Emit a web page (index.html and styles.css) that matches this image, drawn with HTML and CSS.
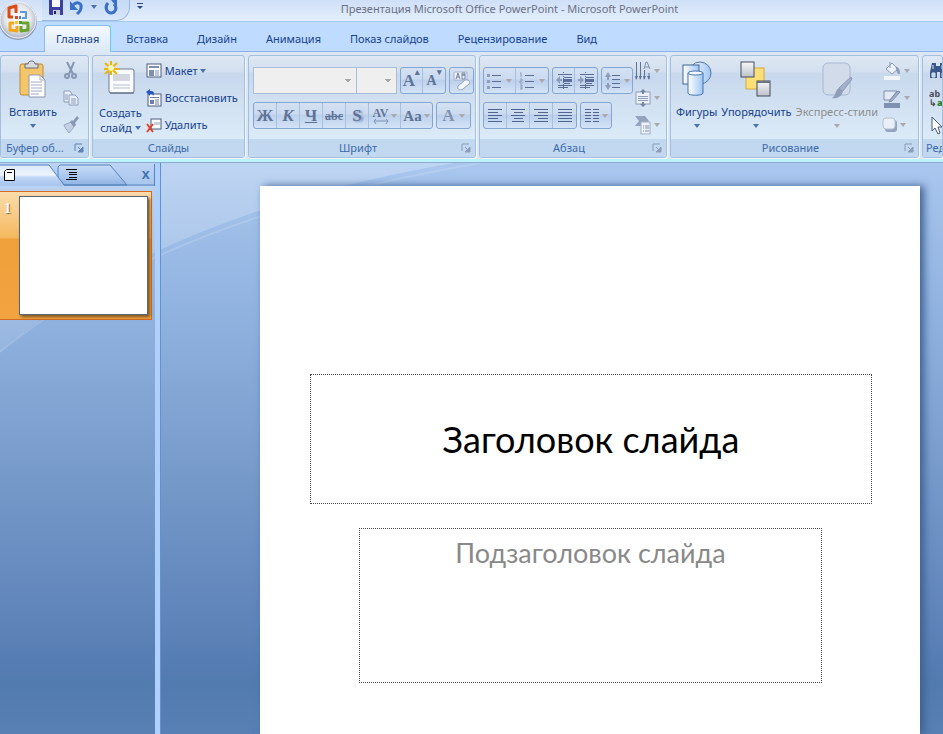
FILE: index.html
```html
<!DOCTYPE html>
<html lang="ru">
  <head>
    <meta charset="UTF-8" />
    <meta name="viewport" content="width=device-width, initial-scale=1.0" />
    <title>Презентация Microsoft Office PowerPoint</title>
    <link rel="stylesheet" href="styles.css">
  </head>
  <body>
    <!-- Title bar -->
    <header class="titlebar">
      <button class="office" aria-label="Office">
        <svg width="40" height="44" viewBox="0 0 40 44">
          <defs>
            <radialGradient id="orb" cx="50%" cy="45%" r="55%">
              <stop offset="0" stop-color="#ffffff" />
              <stop offset="0.65" stop-color="#e6e8ec" />
              <stop offset="1" stop-color="#a9b2c2" />
            </radialGradient>
          </defs>
          <circle cx="18" cy="21" r="19" fill="#8f9db4" />
          <circle cx="18" cy="20" r="18" fill="url(#orb)" stroke="#f4f7fb" />
          <g fill="none" stroke-width="3" stroke-linejoin="round">
            <path d="M13 17H9V8l7-2v7" stroke="#dc4a18" />
            <path d="M20 12h6v6h-4" stroke="#5b9bdc" stroke-width="2" />
            <path d="M14 23h-4v7l7 1v-5" stroke="#f3a51c" />
            <path d="M22 23h6v7l-7 1v-5" stroke="#6aa329" />
          </g>
          <path d="M15 16h3v3h-3z" fill="#dc4a18" />
          <path d="M19 16h2v3h-2z" fill="#3f7fcc" />
          <path d="M15 21h3v3h-3z" fill="#f9c431" />
          <path d="M19 21h3v3h-3z" fill="#4f9b2c" />
        </svg>
      </button>
      <div class="quick">
        <button aria-label="Сохранить">
          <svg width="14" height="18" viewBox="0 0 14 18">
            <path d="M0 0h14v15H1l-1-1z" fill="#3d3fa0" />
            <path d="M3 0h8v7H3z" fill="#f5f8ff" />
            <path d="M4 10h7v5H4z" fill="#c9cede" />
            <path d="M5 11h2v3H5z" fill="#20225c" />
          </svg>
        </button>
        <button aria-label="Отменить">
          <svg width="14" height="18" viewBox="0 0 14 18">
            <path d="M3 5c4-4 9-2 8 3 0 3-2 4-4 6" fill="none" stroke="#3b6fcb" stroke-width="3" />
            <path d="M0 1v9h8z" fill="#3b6fcb" />
          </svg>
        </button>
        <span class="caret"></span>
        <button aria-label="Вернуть">
          <svg width="14" height="18" viewBox="0 0 14 18">
            <path d="M4 3c-4 4-1 10 3 10s7-5 3-9" fill="none" stroke="#3b6fcb" stroke-width="3" />
            <path d="M7 0h6v7z" fill="#3b6fcb" />
          </svg>
        </button>
      </div>
      <button class="customize" aria-label="Настройка панели">
        <svg width="6" height="7" viewBox="0 0 6 7"><path d="M0 0h6v1H0zM0 3h6L3 6z" fill="#2c4d82" /></svg>
      </button>
      <span class="caption">Презентация Microsoft Office PowerPoint - Microsoft PowerPoint</span>
    </header>

    <!-- Ribbon tabs -->
    <nav class="tabs">
      <a href="#" class="active">Главная</a>
      <a href="#">Вставка</a>
      <a href="#">Дизайн</a>
      <a href="#">Анимация</a>
      <a href="#">Показ слайдов</a>
      <a href="#">Рецензирование</a>
      <a href="#">Вид</a>
    </nav>

    <!-- Ribbon -->
    <div class="ribbon">
      <section class="group clipboard">
        <div class="tools">
          <button class="big">
            <svg width="28" height="38" viewBox="0 0 28 38">
              <rect x="1" y="3" width="23" height="31" rx="2" fill="#f3c66b" stroke="#c08a35" />
              <path d="M6 7V3h3c0-4 7-4 7 0h3v4z" fill="#d8dbe0" stroke="#666c78" />
              <path d="M10 14h11l5 5v17H10z" fill="#fff" stroke="#8b98b0" />
              <path d="M21 14v5h5M12 21h11M12 24h11M12 27h11M12 30h11M12 33h8" fill="none" stroke="#a0abc2" />
            </svg>
            <span>Вставить</span>
            <span class="caret"></span>
          </button>
          <div class="stack">
            <button aria-label="Вырезать">
              <svg width="16" height="18" viewBox="0 0 16 18" fill="none" stroke="#8796b4" stroke-width="2">
                <path d="M4 0l6 12M11 0L6 12" />
                <circle cx="4" cy="14" r="2" />
                <circle cx="11" cy="14" r="2" />
              </svg>
            </button>
            <button aria-label="Копировать">
              <svg width="16" height="18" viewBox="0 0 16 18" fill="#e9eef8" stroke="#8c9cba">
                <path d="M1 2h6l2 3v8H1z" />
                <path d="M6 6h6l3 3v7H6z" />
                <path d="M8 10h5M8 12h5M8 14h5M2 6h3M2 8h3M2 10h3" />
              </svg>
            </button>
            <button aria-label="Формат по образцу">
              <svg width="16" height="18" viewBox="0 0 16 18">
                <path d="M1 9l7-3 3 5-5 6c-2-3-4-5-5-8z" fill="#c4d0e4" stroke="#99a9c5" />
                <path d="M7 6l2-2 1 1 4-5 2 2-4 5 1 2-2 2z" fill="#8797b4" />
              </svg>
            </button>
          </div>
        </div>
        <footer>
          <h2>Буфер об...</h2>
          <button class="launch" aria-label="Параметры буфера"><svg width="8" height="8" viewBox="0 0 8 8"><path d="M0 7V0h7" fill="none" stroke="#5f83b5" /><path d="M3 3l4 4M8 3v5H3z" fill="#5f83b5" stroke="#5f83b5" /></svg></button>
        </footer>
      </section>

      <section class="group slides">
        <div class="tools">
          <button class="big">
            <svg width="30" height="38" viewBox="0 0 30 38">
              <rect x="4" y="8" width="25" height="24" rx="2" fill="#fafbfd" stroke="#6f7c93" />
              <path d="M8 13h17v7H8z" fill="#d3d7e0" />
              <path d="M8 24h17M8 27h17" stroke="#b6bdcb" />
              <path d="M5 32h24" stroke="#59667f" />
              <path d="M6 0v14M0 2l12 11M12 2L0 13M-1 8h15" stroke="#f0b400" stroke-width="2" />
              <circle cx="6" cy="7" r="3" fill="#fff9b5" />
            </svg>
            <span>Создать</span>
            <span class="inline">слайд <i class="caret"></i></span>
          </button>
          <div class="stack">
            <button>
              <svg width="16" height="16" viewBox="0 0 16 16">
                <rect x="1" y="1" width="14" height="13" fill="#fff" stroke="#4d5d7c" />
                <path d="M3 3h10v2H3zM3 7h5v6H3z" fill="#7b8eb3" />
                <path d="M9 8h4M9 10h4M9 12h4" stroke="#7b8eb3" />
              </svg>
              Макет <i class="caret"></i>
            </button>
            <button>
              <svg width="16" height="18" viewBox="0 0 16 18">
                <rect x="2" y="5" width="13" height="12" fill="#fff" stroke="#4d5d7c" />
                <path d="M4 8h9v1H4zM4 11h4v4H4z" fill="#6b7fa8" />
                <path d="M9 11h4M9 13h4M9 15h4" stroke="#6b7fa8" />
                <path d="M0 3l4-3v2c4 0 5 2 3 5 0-2-1-2-3-2v2z" fill="#2559c0" />
              </svg>
              Восстановить
            </button>
            <button>
              <svg width="16" height="16" viewBox="0 0 16 16">
                <rect x="5" y="2" width="10" height="10" fill="#fafcff" stroke="#4d5d7c" />
                <path d="M8 5h6v3H8z" fill="#c8d1e2" />
                <path d="M1 7l6 8M7 7l-6 8" stroke="#e0402a" stroke-width="2" />
              </svg>
              Удалить
            </button>
          </div>
        </div>
        <footer><h2>Слайды</h2></footer>
      </section>

      <section class="group font">
        <div class="tools rows">
          <div class="row">
            <div class="combos">
              <select class="face" aria-label="Шрифт" disabled></select>
              <select class="size" aria-label="Размер" disabled></select>
            </div>
            <div class="set">
              <button class="serif grow" aria-label="Увеличить">A<sup>▴</sup></button>
              <button class="serif shrink" aria-label="Уменьшить">A<sup>▾</sup></button>
            </div>
            <div class="set">
              <button aria-label="Очистить формат">
                <svg width="18" height="20" viewBox="0 0 18 20">
                  <path d="M1 1h13v8H1z" fill="#edf1f9" stroke="#a9b6ce" />
                  <path d="M3 8l2-6 2 6M4 6h2M9 2v6M9 2h3v2H9h3v4H9" fill="none" stroke="#7383a3" />
                  <path d="M5 15l7-6c3-1 6 2 4 4l-6 5c-4 2-6 0-5-3z" fill="#f4f6fb" stroke="#8f9fbd" />
                </svg>
              </button>
            </div>
          </div>
          <div class="row">
            <div class="set">
              <button class="serif">Ж</button>
              <button class="serif"><em>К</em></button>
              <button class="serif"><u>Ч</u></button>
              <button class="serif strike"><s>abc</s></button>
              <button class="serif shade">S</button>
              <button class="serif spacing" aria-label="Интервал">
                <span>AV<svg width="16" height="5" viewBox="0 0 16 5"><path d="M1 2h14M3 0L1 2l2 3M13 0l2 2-2 3" fill="none" stroke="#7f92b6" /></svg></span>
                <i class="caret"></i>
              </button>
              <button class="serif case">Aa<i class="caret"></i></button>
            </div>
            <div class="set">
              <button class="serif color">A <i class="caret"></i></button>
            </div>
          </div>
        </div>
        <footer>
          <h2>Шрифт</h2>
          <button class="launch dim" aria-label="Параметры шрифта"><svg width="8" height="8" viewBox="0 0 8 8"><path d="M0 7V0h7" fill="none" stroke="#8d9db8" /><path d="M3 3l4 4M8 3v5H3z" fill="#8d9db8" stroke="#8d9db8" /></svg></button>
        </footer>
      </section>

      <section class="group paragraph">
        <div class="tools">
          <div class="rows">
            <div class="row">
              <div class="set">
                <button aria-label="Маркеры" class="wide">
                  <svg width="14" height="18" viewBox="0 0 14 18"><path d="M5 3.5h9M5 9.5h9M5 15.5h9" stroke="#5b6f95" /><path d="M0 2h3v3H0zM0 8h3v3H0zM0 14h3v3H0z" fill="#8d9dbb" /></svg>
                  <i class="caret"></i>
                </button>
                <button aria-label="Нумерация" class="wide">
                  <svg width="14" height="18" viewBox="0 0 14 18"><path d="M5 3.5h9M5 9.5h9M5 15.5h9" stroke="#5b6f95" /><path d="M0 1h1v4M0 7h2v2H0v2h3M0 13h2v4H0M0 15h2" fill="none" stroke="#8d9dbb" /></svg>
                  <i class="caret"></i>
                </button>
              </div>
              <div class="set">
                <button aria-label="Уменьшить отступ" class="narrow">
                  <svg width="16" height="18" viewBox="0 0 16 18"><path d="M2 2.5h14M8 5.5h8M8 11.5h6M2 13.5h14M2 15.5h10" stroke="#5b6f95" /><path d="M7 7h9v3H7z" fill="#5b6f95" /><path d="M0 8l4-4v3h2v2H4v3z" fill="#8d9dbb" /><path d="M7.500 0v18" stroke="#5b6f95" stroke-dasharray="1 1" /></svg>
                </button>
                <button aria-label="Увеличить отступ" class="narrow">
                  <svg width="16" height="18" viewBox="0 0 16 18"><path d="M2 2.5h14M8 5.5h8M8 11.5h6M2 13.5h14M2 15.5h10" stroke="#5b6f95" /><path d="M7 7h9v3H7z" fill="#5b6f95" /><path d="M6 8L2 4v3H0v2h2v3z" fill="#8d9dbb" /><path d="M7.500 0v18" stroke="#5b6f95" stroke-dasharray="1 1" /></svg>
                </button>
              </div>
              <div class="set">
                <button aria-label="Междустрочный интервал" class="line">
                  <svg width="16" height="18" viewBox="0 0 16 18"><path d="M7 3.5h8M7 7.5h8M7 11.5h8M7 15.5h8" stroke="#5b6f95" /><path d="M3 3v5M3 11v4" stroke="#8d9dbb" stroke-width="2" /><path d="M0 5l3-5 3 5zM0 13l3 5 3-5z" fill="#8d9dbb" /></svg>
                  <i class="caret"></i>
                </button>
              </div>
            </div>
            <div class="row">
              <div class="set">
                <button aria-label="По левому краю"><svg width="14" height="14" viewBox="0 0 14 14"><path d="M0 .5h14M0 3.500h10M0 6.500h14M0 9.500h10M0 12.500h14" stroke="#4f648e" /></svg></button>
                <button aria-label="По центру"><svg width="14" height="14" viewBox="0 0 14 14"><path d="M0 .5h14M3 3.500h9M0 6.500h14M3 9.500h9M1 12.500h12" stroke="#4f648e" /></svg></button>
                <button aria-label="По правому краю"><svg width="14" height="14" viewBox="0 0 14 14"><path d="M0 .5h14M4 3.500h10M0 6.500h14M4 9.500h10M0 12.500h14" stroke="#4f648e" /></svg></button>
                <button aria-label="По ширине"><svg width="14" height="14" viewBox="0 0 14 14"><path d="M0 .5h14M0 3.500h14M0 6.500h14M0 9.500h14M0 12.500h14" stroke="#4f648e" /></svg></button>
              </div>
              <div class="set">
                <button aria-label="Колонки" class="line">
                  <svg width="14" height="14" viewBox="0 0 14 14"><path d="M0 .5h6M8 .5h6M0 3.500h6M8 3.500h6M0 6.500h6M8 6.500h6M0 9.500h6M8 9.500h6M0 12.500h6M8 12.500h6" stroke="#4f648e" /></svg>
                  <i class="caret"></i>
                </button>
              </div>
            </div>
          </div>
          <div class="stack">
            <button aria-label="Направление текста">
              <svg width="16" height="20" viewBox="0 0 16 20"><path d="M1.500 1v17M5.500 1v17M9.500 9v9M14 12v6" stroke="#5f7297" /><path d="M0 15l1 4 2-4M4 15l1 4 2-4M8 15l1 4 2-4M12 15l2 4 1-4" fill="#5f7297" /><path d="M9 8l2-7h1l3 7M10 6h4" fill="none" stroke="#7f8fae" /></svg>
              <i class="caret"></i>
            </button>
            <button aria-label="Выравнивание текста">
              <svg width="16" height="20" viewBox="0 0 16 20"><rect x="1" y="4" width="14" height="12" fill="#edf1f9" stroke="#8d9dbb" /><path d="M3 8.500h10M3 10.500h10M3 12.500h10" stroke="#8d9dbb" /><path d="M5 4l3-3 3 3H9v2H7V4zM5 16l3 3 3-3H9v-2H7v2z" fill="#74849f" /></svg>
              <i class="caret"></i>
            </button>
            <button aria-label="Преобразовать в SmartArt">
              <svg width="16" height="20" viewBox="0 0 16 20"><path d="M0 1h10l4 5-3 5H0l4-5z" fill="#94a3be" /><rect x="6" y="7" width="9" height="12" fill="#edf1f9" stroke="#a3b0c8" /><path d="M8 11h1M8 13h1M8 16h1M10 11h4M10 13h4M10 16h4" stroke="#8191b0" /></svg>
              <i class="caret"></i>
            </button>
          </div>
        </div>
        <footer>
          <h2>Абзац</h2>
          <button class="launch dim" aria-label="Параметры абзаца"><svg width="8" height="8" viewBox="0 0 8 8"><path d="M0 7V0h7" fill="none" stroke="#8d9db8" /><path d="M3 3l4 4M8 3v5H3z" fill="#8d9db8" stroke="#8d9db8" /></svg></button>
        </footer>
      </section>

      <section class="group drawing">
        <div class="tools">
          <button class="big">
            <svg width="32" height="38" viewBox="0 0 32 38">
              <defs>
                <linearGradient id="glass" x1="0" x2="1"><stop offset="0" stop-color="#fff" /><stop offset="1" stop-color="#9fc6f5" /></linearGradient>
              </defs>
              <circle cx="19" cy="12" r="11" fill="url(#glass)" stroke="#57789f" />
              <rect x="2" y="4" width="16" height="19" fill="url(#glass)" stroke="#3f6796" />
              <path d="M7 12v20c0 3 15 3 15 0V12z" fill="url(#glass)" stroke="#4272ad" />
              <ellipse cx="14.500" cy="12" rx="7.500" ry="2" fill="#f3f8ff" stroke="#4272ad" />
            </svg>
            <span>Фигуры</span>
            <span class="caret"></span>
          </button>
          <button class="big">
            <svg width="32" height="38" viewBox="0 0 32 38">
              <defs>
                <linearGradient id="steel" x2="0" y2="1"><stop offset="0" stop-color="#f7f8fa" /><stop offset="1" stop-color="#bcc1cb" /></linearGradient>
              </defs>
              <rect x="6" y="7" width="18" height="21" fill="#fbe07a" stroke="#d9a93a" />
              <rect x="1" y="1" width="13" height="15" fill="url(#steel)" stroke="#454c5b" />
              <rect x="17" y="20" width="13" height="15" fill="url(#steel)" stroke="#454c5b" />
              <path d="M17 21h13" stroke="#6c7482" stroke-width="2" />
            </svg>
            <span>Упорядочить</span>
            <span class="caret"></span>
          </button>
          <button class="big" disabled>
            <svg width="32" height="38" viewBox="0 0 32 38">
              <rect x="2" y="2" width="27" height="32" rx="5" fill="#d2dbea" stroke="#a9b7d0" />
              <path d="M30 16l1 2-9 12-4-3z" fill="#a5b1c8" stroke="#8d9bb8" />
              <path d="M18 27l4 3c-1 5-5 8-11 7 4-2 3-8 7-10z" fill="#8f9dba" />
            </svg>
            <span>Экспресс-стили</span>
            <span class="caret"></span>
          </button>
          <div class="stack">
            <button aria-label="Заливка фигуры">
              <svg width="18" height="20" viewBox="0 0 18 20"><path d="M3 8l6-6 6 6-6 5z" fill="#edf1f8" stroke="#8c9bb8" /><path d="M7 1v6M13 6c3 1 4 4 3 7-2-1-2-4-3-7z" fill="#8c9bb8" stroke="#8c9bb8" /><path d="M1 15h16v4H1z" fill="#f1f4f9" /></svg>
              <i class="caret"></i>
            </button>
            <button aria-label="Контур фигуры">
              <svg width="18" height="20" viewBox="0 0 18 20"><path d="M1 3h13L7 12H1z" fill="#e4eaf5" stroke="#7d8dac" /><path d="M7 12l8-9 2 1-8 9-3 1z" fill="#a5b2ca" stroke="#7d8dac" /><path d="M1 15h16v5H1z" fill="#7f91b2" /></svg>
              <i class="caret"></i>
            </button>
            <button aria-label="Эффекты для фигур">
              <svg width="14" height="20" viewBox="2 0 14 20"><rect x="4" y="5" width="12" height="12" rx="3" fill="#92a2bf" /><rect x="2" y="3" width="12" height="11" rx="3" fill="#e9eef7" stroke="#b4c0d5" /></svg>
              <i class="caret"></i>
            </button>
          </div>
        </div>
        <footer>
          <h2>Рисование</h2>
          <button class="launch dim" aria-label="Параметры рисования"><svg width="8" height="8" viewBox="0 0 8 8"><path d="M0 7V0h7" fill="none" stroke="#8d9db8" /><path d="M3 3l4 4M8 3v5H3z" fill="#8d9db8" stroke="#8d9db8" /></svg></button>
        </footer>
      </section>

      <section class="group editing">
        <div class="tools">
          <div class="stack">
            <button aria-label="Найти">
              <svg width="18" height="18" viewBox="0 0 18 18"><path d="M3 1h4v3h4V1h4l3 9v6h-7v-6H8v6H1v-6z" fill="#3b5688" /><path d="M4 3v4M13 3v4M3 11h3v4H3zM13 11h3v4h-3z" stroke="#dbe7fa" fill="#b8cdf0" /></svg>
            </button>
            <button aria-label="Заменить" class="replace"><span>ab</span><span>↳<b>ac</b></span></button>
            <button aria-label="Выделить">
              <svg width="18" height="20" viewBox="0 0 18 20"><path d="M3 2v14l3-3 3 6 2-1-2-6h4z" fill="#fff" stroke="#4a5a78" /></svg>
            </button>
          </div>
        </div>
        <footer><h2>Ред</h2></footer>
      </section>
    </div>

    <!-- Work area -->
    <main class="work">
      <svg class="swoosh" width="1000" height="573" viewBox="0 0 1000 573" aria-hidden="true">
        <defs>
          <linearGradient id="fade" x2="0" y2="1"><stop offset="0" stop-color="#fff" stop-opacity="0.25" /><stop offset="1" stop-color="#fff" stop-opacity="0.1" /></linearGradient>
        </defs>
        <path d="M0 0H460Q160 50 0 190z" fill="url(#fade)" />
        <path d="M480 1Q165 55 0 190" fill="none" stroke="#fff" stroke-opacity="0.15" stroke-width="2" />
      </svg>
      <aside class="pane">
        <div class="paneTabs">
          <svg class="tabShape" width="154" height="22" viewBox="0 0 154 22" aria-hidden="true">
            <defs>
              <linearGradient id="tabOn" x2="0" y2="1"><stop offset="0" stop-color="#dbe8fb" /><stop offset="0.5" stop-color="#eef4fe" /><stop offset="0.6" stop-color="#c1d7f6" /><stop offset="1" stop-color="#a9c6f0" /></linearGradient>
              <linearGradient id="tabOff" x2="0" y2="1"><stop offset="0" stop-color="#c8dcf6" /><stop offset="0.6" stop-color="#a9c6ee" /><stop offset="1" stop-color="#8fb3e2" /></linearGradient>
            </defs>
            <path d="M58 14V3l2-2h50l17 20H64z" fill="url(#tabOff)" stroke="#5484bf" />
            <path d="M0 1h49l15 20H0z" fill="url(#tabOn)" />
            <path d="M0 1h49l15 20h90" fill="none" stroke="#5484bf" />
          </svg>
          <button aria-label="Слайды"><svg width="12" height="12" viewBox="0 0 12 12"><path d="M2.500 .5h8v11H.5v-9z" fill="#fff" stroke="#000" /><path d="M3 3h5v1H3z" /></svg></button>
          <button aria-label="Структура"><svg width="12" height="12" viewBox="0 0 12 12"><path d="M0 0h11v1H0zM3 3h8v1H3zM3 5h8v1H3zM3 8h8v1H3zM0 10h11v1H0z" /></svg></button>
          <button class="close" aria-label="Закрыть">x</button>
        </div>
        <div class="item">
          <span>1</span>
          <div class="thumb"></div>
        </div>
      </aside>
      <div class="canvas">
        <article class="slide">
          <div class="holder heading">Заголовок слайда</div>
          <div class="holder sub">Подзаголовок слайда</div>
        </article>
      </div>
    </main>
  </body>
</html>
```
FILE: styles.css
```css
* {
  box-sizing: border-box;
}
body {
  margin: 0;
  height: 100vh;
  overflow: hidden;
  display: flex;
  flex-direction: column;
  font-family: "Noto Sans", "Open Sans", sans-serif;
  font-size: 11px;
  line-height: 14px;
  color: #15428b;
  background-color: #bfdbff;
}
button {
  display: flex;
  align-items: center;
  justify-content: center;
  padding: 0;
  border: none;
  background: none;
  font: inherit;
  color: inherit;
  white-space: nowrap;
}
svg {
  display: block;
  flex: none;
  overflow: visible;
}
.caret {
  display: inline-block;
  flex: none;
  border: 3px solid transparent;
  border-top: 4px solid #4a72ad;
  border-bottom: none;
}

/* Title bar */
.titlebar {
  position: relative;
  display: flex;
  flex: none;
  height: 22px;
  padding-left: 42px;
  background: linear-gradient(#cfdff7, #e3effc);
  border-bottom: 1px solid #a8cbf0;
}
.office {
  position: absolute;
  left: 0;
  top: 0;
  z-index: 2;
}
.quick {
  display: flex;
  align-items: flex-start;
  gap: 7px;
  width: 88px;
  padding-left: 7px;
  background: linear-gradient(#c3d9f5, #d8e7fa);
  border: 1px solid #9bb9e0;
  border-top: none;
  border-left: none;
  border-radius: 0 0 14px 0;
}
.quick .caret {
  margin-top: 5px;
}
.customize {
  width: 20px;
  height: 13px;
}
.caption {
  flex: 1;
  padding-right: 74px;
  text-align: center;
  line-height: 17px;
  color: #6b7184;
}

/* Ribbon tabs */
.tabs {
  display: flex;
  flex: none;
  gap: 1px;
  height: 30px;
  padding: 3px 0 0 44px;
  border-bottom: 1px solid #8db2e3;
}
.tabs a {
  padding: 0 14px;
  line-height: 28px;
  color: #15428b;
  text-decoration: none;
  white-space: nowrap;
}
.tabs .active {
  padding: 0 11px;
  height: 27px;
  line-height: 26px;
  background: linear-gradient(#f3f9ff, #dce8f7);
  border: 1px solid #8ebaea;
  border-bottom: none;
  border-radius: 4px 4px 0 0;
  box-shadow: 1px 0 2px #8ff0ff;
}

/* Ribbon */
.ribbon {
  position: relative;
  z-index: 1;
  display: flex;
  flex: none;
  gap: 3px;
  height: 110px;
  padding-top: 3px;
  background-color: #dbe7f5;
  border-bottom: 3px solid #bcf3ff;
  box-shadow: 0 1px 0 #8daccf;
}
.group {
  display: flex;
  flex-direction: column;
  flex: none;
  height: 103px;
  overflow: hidden;
  border: 1px solid #a3bfdd;
  border-radius: 3px;
  background: linear-gradient(#dfe8f4 0, #d3dfef 16px, #c8d8ed 17px, #dcebf8 84px);
  box-shadow: 1px 1px 0 #f2f8ff;
}
.clipboard {
  width: 89px;
}
.slides {
  width: 153px;
}
.font {
  width: 228px;
}
.paragraph {
  width: 188px;
}
.drawing {
  width: 249px;
}
.editing {
  flex: 1;
}
.tools {
  display: flex;
  flex: 1;
  min-height: 0;
  padding: 3px;
}
.group footer {
  display: flex;
  flex: none;
  align-items: center;
  height: 18px;
  padding: 0 5px;
  background-color: #c1d8f0;
  color: #3e6aaa;
}
.group h2 {
  flex: 1;
  margin: 0;
  font-size: 11px;
  font-weight: 400;
  text-align: center;
  white-space: nowrap;
}
.clipboard h2,
.editing h2 {
  text-align: left;
}
.group.editing footer {
  padding: 0 3px;
}
.launch {
  width: 8px;
  height: 14px;
}
.big {
  flex-direction: column;
  justify-content: flex-start;
  align-self: flex-start;
  padding: 2px;
}
.big svg {
  margin-bottom: 6px;
}
.big .caret {
  margin-top: 5px;
}
.big .inline .caret {
  margin: 0 0 2px;
}
.slides .big {
  padding: 2px 3px;
  line-height: 15px;
}
.clipboard .big {
  padding: 2px 3px 2px 5px;
}
.big:disabled {
  color: #8d8d8d;
}
.big:disabled .caret,
.paragraph .caret,
.font .caret,
.drawing .stack .caret {
  border-top-color: #a7a9ad;
}
.stack {
  display: flex;
  flex-direction: column;
  margin: -2px 0 0 3px;
}
.stack button {
  flex: none;
  gap: 3px;
  height: 27px;
  justify-content: flex-start;
}
.slides .stack {
  margin-left: 1px;
}
.slides .stack .caret {
  margin-left: -1px;
}

/* Button sets */
.rows {
  display: flex;
  flex-direction: column;
  gap: 8px;
}
.font .tools {
  padding: 11px 4px 0;
}
.paragraph .tools {
  padding: 3px 3px 0;
}
.paragraph .rows {
  padding-top: 8px;
}
.row {
  display: flex;
  gap: 3px;
}
.set {
  display: flex;
  height: 27px;
  border: 1px solid #86a6d2;
  border-radius: 3px;
  background: linear-gradient(#d4e1f3 0, #cbdaf0 11px, #bccfeb 12px, #d3e3f7);
}
.set button {
  width: 23px;
  gap: 4px;
  border-right: 1px solid #a8c0e0;
}
.set button:last-child {
  border-right: none;
}
.set .wide {
  width: 32px;
  gap: 5px;
}
.set .line {
  width: 30px;
  gap: 3px;
}
.set .narrow {
  width: 22px;
}
.combos {
  display: flex;
}
.combos select {
  appearance: none;
  height: 27px;
  border: 1px solid #a9bdd8;
  border-radius: 0;
  opacity: 1;
  background: linear-gradient(to top right, transparent 50%, #a7a9ad 51%) right 8px center / 3px 4px no-repeat,
    linear-gradient(to top left, transparent 50%, #a7a9ad 51%) right 5px center / 3px 4px no-repeat, #efefef;
}
.combos .face {
  width: 104px;
}
.combos .size {
  width: 40px;
  border-left: none;
}
.serif {
  font-family: "Liberation Serif", serif;
  font-size: 17px;
  font-weight: 700;
  color: #5f7398;
}
.serif sup {
  font-size: 9px;
  line-height: 9px;
  align-self: flex-start;
}
.set .grow,
.set .shrink {
  width: 22px;
  gap: 0;
}
.font .shrink {
  font-size: 14px;
}
.font .strike {
  font-size: 12px;
}
.font .shade {
  text-shadow: 2px 1px 2px #7f93b8;
}
.font .spacing {
  width: 32px;
  gap: 2px;
  font-size: 12px;
  line-height: 12px;
}
.font .case {
  width: 31px;
  gap: 2px;
  font-size: 15px;
}
.font .color {
  width: 33px;
  color: #8292b2;
}
.paragraph .stack {
  margin-left: 2px;
}
.stack .replace {
  flex-direction: column;
  align-items: flex-start;
  justify-content: center;
  gap: 0;
  font-size: 9px;
  line-height: 9px;
  font-weight: 700;
  color: #4b4f59;
}
.replace span {
  display: block;
}
.replace b {
  color: #23801f;
}

/* Work area */
.work {
  position: relative;
  display: flex;
  flex: 1;
  min-height: 0;
  overflow: hidden;
  background: linear-gradient(#a9c7ef 0, #8aaddb 33%, #7397c7 58%, #5f84ba 80%, #527bb0 91%, #5880b5);
}
.swoosh {
  position: absolute;
  left: 0;
  top: 0;
}
.pane {
  position: relative;
  flex: none;
  width: 160px;
  padding-top: 2px;
  border-right: 5px solid #aed0fb;
  box-shadow: 1px 0 0 #5e92d4;
}
.paneTabs {
  position: relative;
  display: flex;
  align-items: flex-start;
  gap: 50px;
  height: 22px;
  padding: 5px 4px 0;
  background: linear-gradient(#bcd3f3, #a8c5ee);
  border-right: 1px solid #5484bf;
}
.tabShape {
  position: absolute;
  left: 0;
  top: 0;
}
.paneTabs button {
  position: relative;
}
.paneTabs .close {
  margin-left: auto;
  font-family: "Liberation Mono", monospace;
  font-size: 14px;
  line-height: 12px;
  font-weight: 700;
  color: #3d6fad;
}
.item {
  display: flex;
  gap: 8px;
  height: 129px;
  margin: 5px 3px 0 0;
  padding: 4px 3px 4px 4px;
  border: 1px solid #d9691e;
  border-left: none;
  background: linear-gradient(#fbdcab 0, #f5b95f 46px, #f0a03a 47px, #f2a441);
}
.item span {
  width: 7px;
  padding-top: 6px;
  font-family: "Liberation Serif", serif;
  font-size: 14px;
  font-weight: 700;
  color: #fff;
  text-shadow: 1px 1px 1px #8a6a3a;
}
.thumb {
  flex: 1;
  background-color: #fff;
  border: 1px solid #5d6778;
  box-shadow: 2px 2px 3px #7a5520;
}
.canvas {
  position: relative;
  flex: 1;
  padding: 24px 23px 0 100px;
}
.slide {
  height: 100%;
  padding: 188px 48px 0 50px;
  background-color: #fff;
  box-shadow: 4px 0 8px #3d5f91;
}
.holder {
  border: 1px dotted #444;
  font-family: Lato, sans-serif;
  text-align: center;
  white-space: nowrap;
}
.heading {
  height: 130px;
  font-size: 36px;
  line-height: 128px;
  color: #000;
}
.sub {
  height: 155px;
  margin: 24px 50px 0 49px;
  padding-top: 6px;
  font-size: 27px;
  line-height: 36px;
  color: #898989;
}
```
